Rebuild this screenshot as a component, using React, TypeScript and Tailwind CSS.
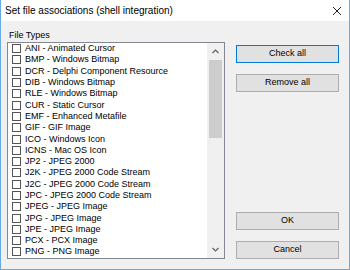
import React from "react";

const fileTypes = [
  "ANI - Animated Cursor",
  "BMP - Windows Bitmap",
  "DCR - Delphi Component Resource",
  "DIB - Windows Bitmap",
  "RLE - Windows Bitmap",
  "CUR - Static Cursor",
  "EMF - Enhanced Metafile",
  "GIF - GIF Image",
  "ICO - Windows Icon",
  "ICNS - Mac OS Icon",
  "JP2 - JPEG 2000",
  "J2K - JPEG 2000 Code Stream",
  "J2C - JPEG 2000 Code Stream",
  "JPC - JPEG 2000 Code Stream",
  "JPEG - JPEG Image",
  "JPG - JPEG Image",
  "JPE - JPEG Image",
  "PCX - PCX Image",
  "PNG - PNG Image",
];

function Button({ label, focused }: { label: string; focused?: boolean }) {
  return (
    <button
      className={
        "h-[18px] w-[103px] flex items-center justify-center bg-[#e1e1e1] border text-[9px] text-black " +
        (focused ? "border-[#0078d7]" : "border-[#adadad]")
      }
    >
      {label}
    </button>
  );
}

function Chevron({ up }: { up?: boolean }) {
  return (
    <svg width="7" height="5" viewBox="0 0 7 5">
      <path
        d={up ? "M0.5 4 L3.5 1 L6.5 4" : "M0.5 1 L3.5 4 L6.5 1"}
        fill="none"
        stroke="#606060"
        strokeWidth="1.2"
      />
    </svg>
  );
}

export default function App() {
  return (
    <div
      className="w-[350px] h-[270px] flex flex-col bg-[#f0f0f0] border border-t-0 border-[#6aa9e0] overflow-hidden text-black"
      style={{ fontFamily: '"Liberation Sans", Arial, sans-serif' }}
    >
      {/* Title bar */}
      <div className="h-[21px] shrink-0 bg-white flex items-center justify-between pl-[4px] pr-[6px]">
        <span className="text-[10px] leading-none">Set file associations (shell integration)</span>
        <svg width="10" height="10" viewBox="0 0 10 10" className="mr-[1px]">
          <path d="M1 1 L9 9 M9 1 L1 9" stroke="#222" strokeWidth="1" />
        </svg>
      </div>

      {/* Body */}
      <div className="flex-1 flex pl-[6px] pb-[11px]">
        {/* List column */}
        <div className="w-[218px] flex flex-col">
          <div className="text-[9px] leading-[12px] mt-[8px] ml-[2px] mb-[1px]">File Types</div>
          <div className="flex-1 flex bg-white border border-[#828790] overflow-hidden">
            <div className="flex-1 flex flex-col">
              {fileTypes.map((t) => (
                <div key={t} className="h-[11.3px] shrink-0 flex items-center pl-[4px] gap-[4px]">
                  <span className="w-[9px] h-[9px] border border-[#555] bg-white shrink-0" />
                  <span className="text-[9px] leading-none whitespace-nowrap">{t}</span>
                </div>
              ))}
            </div>
            {/* Scrollbar */}
            <div className="w-[17px] bg-[#f0f0f0] flex flex-col items-center">
              <div className="h-[17px] flex items-center justify-center">
                <Chevron up />
              </div>
              <div className="w-[13px] h-[78px] bg-[#cdcdcd]" />
              <div className="flex-1" />
              <div className="h-[17px] flex items-center justify-center">
                <Chevron />
              </div>
            </div>
          </div>
        </div>

        {/* Buttons column */}
        <div className="flex flex-col ml-[11px] pt-[24px]">
          <div className="flex flex-col gap-[11px]">
            <Button label="Check all" focused />
            <Button label="Remove all" />
          </div>
          <div className="flex flex-col gap-[11px] mt-auto">
            <Button label="OK" />
            <Button label="Cancel" />
          </div>
        </div>
      </div>
    </div>
  );
}
